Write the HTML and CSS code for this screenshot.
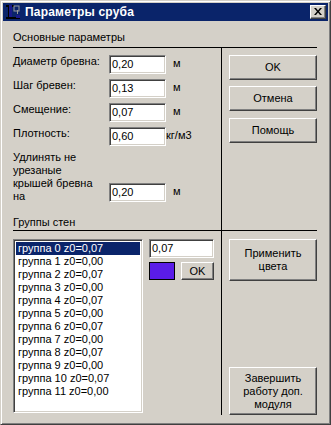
FILE: index.html
```html
<!DOCTYPE html>
<html lang="ru">
<head>
<meta charset="utf-8">
<title>Параметры сруба</title>
<link rel="stylesheet" href="styles.css">
</head>
<body>
<div class="window">
  <div class="titlebar">
    <svg class="app-icon" width="16" height="16" viewBox="0 0 16 16">
      <rect x="1" y="1" width="8" height="2" fill="#000"/>
      <rect x="3" y="1" width="4" height="13" fill="#1a1a8a"/>
      <rect x="3" y="1" width="1" height="13" fill="#000"/>
      <rect x="1" y="13" width="14" height="2" fill="#000"/>
      <rect x="11" y="11" width="4" height="3" fill="#1a1a8a"/>
      <rect x="9" y="2" width="5" height="5" fill="none" stroke="#9a9a9a" stroke-width="1"/>
      <rect x="12" y="6" width="1" height="4" fill="#9a9a9a"/>
    </svg>
    <span class="title">Параметры сруба</span>
    <div class="close-btn">
      <svg width="8" height="7" viewBox="0 0 8 7">
        <path d="M0 0h2l2 2.5L6 0h2L5 3.5 8 7H6L4 4.5 2 7H0l3-3.5z" fill="#000"/>
      </svg>
    </div>
  </div>

  <div class="client">
    <div class="section-title">Основные параметры</div>
    <div class="grid">
      <div class="cell left r1">
        <div class="field">
          <div class="label">Диаметр бревна:</div>
          <div class="ctrl"><div class="edit">0,20</div><span class="unit">м</span></div>
        </div>
        <div class="field">
          <div class="label">Шаг бревен:</div>
          <div class="ctrl"><div class="edit">0,13</div><span class="unit">м</span></div>
        </div>
        <div class="field">
          <div class="label">Смещение:</div>
          <div class="ctrl"><div class="edit">0,07</div><span class="unit">м</span></div>
        </div>
        <div class="field">
          <div class="label">Плотность:</div>
          <div class="ctrl"><div class="edit">0,60</div><span class="unit unit-near">кг/м3</span></div>
        </div>
        <div class="field field-tall">
          <div class="label">Удлинять не<br>урезаные<br>крышей бревна<br>на</div>
          <div class="ctrl ctrl-bottom"><div class="edit">0,20</div><span class="unit">м</span></div>
        </div>
        <div class="section-title groups-title">Группы стен</div>
      </div>
      <div class="cell right r1">
        <div class="btn btn-main">OK</div>
        <div class="btn btn-main gap6">Отмена</div>
        <div class="btn btn-main gap7">Помощь</div>
      </div>

      <div class="cell left r2">
        <div class="listbox">
          <div class="item selected">группа 0 z0=0,07</div>
          <div class="item">группа 1 z0=0,00</div>
          <div class="item">группа 2 z0=0,07</div>
          <div class="item">группа 3 z0=0,00</div>
          <div class="item">группа 4 z0=0,07</div>
          <div class="item">группа 5 z0=0,00</div>
          <div class="item">группа 6 z0=0,07</div>
          <div class="item">группа 7 z0=0,00</div>
          <div class="item">группа 8 z0=0,07</div>
          <div class="item">группа 9 z0=0,00</div>
          <div class="item">группа 10 z0=0,07</div>
          <div class="item">группа 11 z0=0,00</div>
        </div>
        <div class="side">
          <div class="edit edit-wide">0,07</div>
          <div class="side-row">
            <div class="swatch"></div>
            <div class="btn btn-small">OK</div>
          </div>
        </div>
      </div>
      <div class="cell right r2">
        <div class="btn btn-apply">Применить<br>цвета</div>
        <div class="btn btn-finish">Завершить<br>работу доп.<br>модуля</div>
      </div>
    </div>
  </div>
</div>
</body>
</html>
```
FILE: styles.css
```css
* {
  box-sizing: border-box;
}

body {
  margin: 0;
  font-family: "Liberation Sans", Arial, sans-serif;
  font-size: 11px;
  line-height: 13px;
  color: #000;
  background: #d4d0c8;
}

.window {
  width: 331px;
  height: 425px;
  background: #d4d0c8;
  border: 1px solid;
  border-color: #d4d0c8 #404040 #404040 #d4d0c8;
  box-shadow: inset 1px 1px #fff, inset -1px -1px #808080;
  padding: 2px;
  display: flex;
  flex-direction: column;
}

.titlebar {
  height: 18px;
  flex: none;
  background: #0a246a;
  color: #fff;
  display: flex;
  align-items: center;
  padding: 0 2px;
}

.app-icon {
  flex: none;
  display: block;
}

.title {
  flex: 1;
  margin-left: 4px;
  font-weight: bold;
  font-size: 12px;
  line-height: 14px;
  letter-spacing: 0.2px;
}

.close-btn {
  width: 16px;
  height: 14px;
  background: #d4d0c8;
  border: 1px solid;
  border-color: #fff #404040 #404040 #fff;
  box-shadow: inset -1px -1px #808080;
  display: flex;
  align-items: center;
  justify-content: center;
  padding: 0 1px 1px 0;
}

.close-btn svg {
  display: block;
}

.client {
  flex: 1;
  padding: 10px 11px 0 10px;
}

.section-title {
  height: 13px;
  margin-bottom: 3px;
}

.grid {
  display: grid;
  grid-template-columns: 209px 95px;
  border-top: 1px solid #000;
}

.cell.left {
  border-right: 1px solid #000;
}

.cell.r1 {
  border-bottom: 1px solid #000;
}

.cell.left.r1 {
  padding: 7px 0 1px 0;
}

.field {
  display: flex;
  align-items: flex-start;
  height: 19px;
  margin-bottom: 5px;
}

.field-tall {
  height: auto;
  align-items: flex-end;
}

.label {
  width: 96px;
  flex: none;
}

.ctrl {
  display: flex;
  align-items: flex-start;
  height: 19px;
}

.ctrl-bottom {
  margin-bottom: 1px;
}

.edit {
  width: 57px;
  height: 19px;
  background: #fff;
  border: 1px solid;
  border-color: #808080 #fff #fff #808080;
  box-shadow: inset 1px 1px #404040, inset -1px -1px #d4d0c8;
  padding: 2px 2px 0 2px;
  white-space: nowrap;
}

.unit {
  margin-left: 7px;
  padding-top: 2px;
}

.unit-near {
  margin-left: 0;
}

.groups-title {
  margin-top: 13px;
  margin-bottom: 0;
}

.cell.right.r1 {
  padding: 7px 0 0 7px;
}

.btn {
  width: 88px;
  background: #d4d0c8;
  border: 1px solid;
  border-color: #fff #404040 #404040 #fff;
  box-shadow: inset -1px -1px #808080;
  display: flex;
  align-items: center;
  justify-content: center;
  text-align: center;
}

.btn-main {
  height: 25px;
}

.gap6 {
  margin-top: 6px;
}

.gap7 {
  margin-top: 7px;
}

.cell.left.r2 {
  padding: 8px 0 2px 0;
  display: flex;
  align-items: flex-start;
  gap: 6px;
}

.listbox {
  width: 130px;
  height: 174px;
  background: #fff;
  border: 1px solid;
  border-color: #808080 #fff #fff #808080;
  box-shadow: inset 1px 1px #404040, inset -1px -1px #d4d0c8;
  padding: 2px;
}

.item {
  height: 13px;
  padding-left: 2px;
  white-space: nowrap;
}

.item.selected {
  background: #0a246a;
  color: #fff;
}

.side {
  width: 65px;
}

.edit-wide {
  width: 65px;
}

.side-row {
  display: flex;
  align-items: flex-start;
  margin-top: 4px;
  gap: 6px;
}

.swatch {
  width: 26px;
  height: 18px;
  background: #5a1ce8;
  border: 1px solid #000;
}

.btn-small {
  width: 33px;
  height: 18px;
}

.cell.right.r2 {
  padding: 8px 0 0 7px;
  display: flex;
  flex-direction: column;
  align-items: flex-start;
}

.btn-apply {
  height: 42px;
}

.btn-finish {
  height: 48px;
  margin-top: auto;
}
```
